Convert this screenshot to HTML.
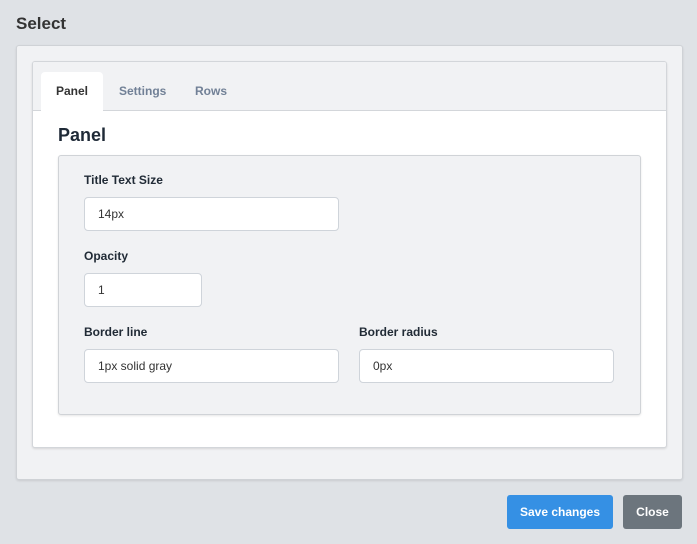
<!DOCTYPE html>
<html><head><meta charset="utf-8"><style>
*{box-sizing:border-box;margin:0;padding:0}
body{width:697px;height:544px;background:#dfe2e6;font-family:"Liberation Sans",sans-serif;position:relative;overflow:hidden;color:#212b36}
.a{position:absolute}
h1{position:absolute;left:16px;top:14px;font-size:17px;font-weight:bold;color:#333}
.outer{left:16px;top:45px;width:667px;height:435px;background:#f1f2f4;border:1px solid #cfd2d6;border-radius:3px;box-shadow:0 1px 2px rgba(0,0,0,.1)}
.card{left:32px;top:61px;width:635px;height:387px;background:#fff;border:1px solid #d3d6da;border-radius:3px;box-shadow:0 1px 2px rgba(0,0,0,.12);overflow:hidden}
.tabs{left:0;top:0;width:100%;height:49px;background:#f1f2f4;border-bottom:1px solid #d3d6da}
.tab{top:10px;height:39px;font-size:12px;font-weight:bold;color:#718096;line-height:38px}
.tab.act{background:#fff;color:#333;border-radius:4px 4px 0 0;left:8px;width:62px;text-align:center;height:40px}
.inner{left:58px;top:155px;width:583px;height:260px;background:#f1f2f4;border:1px solid #d0d3d7;border-radius:3px;box-shadow:0 1px 2px rgba(0,0,0,.1)}
.lbl{font-size:12px;font-weight:bold;color:#212b36}
.in{background:#fff;border:1px solid #cfd4da;border-radius:4px;height:34px;font-size:12px;color:#333;padding-left:13px;line-height:32px}
.btn{top:495px;height:34px;border-radius:3px;color:#fff;font-size:12px;font-weight:bold;text-align:center;line-height:34px}
</style></head><body>
<h1>Select</h1>
<div class="a outer"></div>
<div class="a card">
 <div class="a tabs">
  <div class="a tab act">Panel</div>
  <div class="a tab" style="left:86px">Settings</div>
  <div class="a tab" style="left:162px">Rows</div>
 </div>
</div>
<div class="a" style="left:58px;top:125px;font-size:18px;font-weight:bold;color:#1f2a37">Panel</div>
<div class="a inner"></div>
<div class="a lbl" style="left:84px;top:173px">Title Text Size</div>
<div class="a in" style="left:84px;top:197px;width:255px">14px</div>
<div class="a lbl" style="left:84px;top:249px">Opacity</div>
<div class="a in" style="left:84px;top:273px;width:118px">1</div>
<div class="a lbl" style="left:84px;top:325px">Border line</div>
<div class="a in" style="left:84px;top:349px;width:255px">1px solid gray</div>
<div class="a lbl" style="left:359px;top:325px">Border radius</div>
<div class="a in" style="left:359px;top:349px;width:255px">0px</div>
<div class="a btn" style="left:507px;width:106px;background:#3590e4">Save changes</div>
<div class="a btn" style="left:623px;width:59px;background:#6c757d">Close</div>
</body></html>
